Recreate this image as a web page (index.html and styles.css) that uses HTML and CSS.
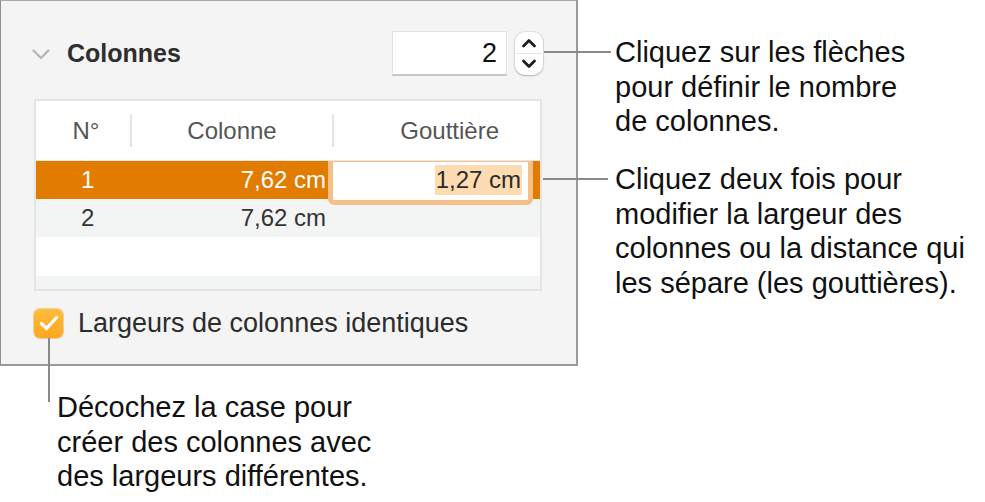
FILE: index.html
```html
<!DOCTYPE html>
<html lang="fr">
<head>
<meta charset="utf-8">
<title>Colonnes</title>
<link rel="stylesheet" href="styles.css">
</head>
<body>
<div class="stage">
  <section class="panel">
    <div class="head">
      <svg class="disclosure" width="18" height="11" viewBox="0 0 18 11"><polyline points="1.5,1.5 9,9 16.5,1.5" fill="none" stroke="#b4b4b4" stroke-width="2.2" stroke-linecap="round" stroke-linejoin="round"/></svg>
      <h2 class="title">Colonnes</h2>
      <div class="numfield">2</div>
      <div class="stepper">
        <svg class="arrow" width="16" height="10" viewBox="0 0 16 10"><polyline points="2.5,8 8,2.5 13.5,8" fill="none" stroke="#1e1e1e" stroke-width="2.8" stroke-linecap="round" stroke-linejoin="round"/></svg>
        <div class="stepsep"></div>
        <svg class="arrow" width="16" height="10" viewBox="0 0 16 10"><polyline points="2.5,2 8,7.5 13.5,2" fill="none" stroke="#1e1e1e" stroke-width="2.8" stroke-linecap="round" stroke-linejoin="round"/></svg>
      </div>
    </div>
    <div class="table">
      <div class="row hrow">
        <div class="hcell c-no">N°</div>
        <div class="hcell c-col sep">Colonne</div>
        <div class="hcell c-gut sep">Gouttière</div>
      </div>
      <div class="row r-sel">
        <div class="cell c-no">1</div>
        <div class="cell c-col">7,62 cm</div>
        <div class="cell c-gut"></div>
        <div class="editor"><span class="hl">1,27 cm</span></div>
      </div>
      <div class="row r-alt">
        <div class="cell c-no">2</div>
        <div class="cell c-col">7,62 cm</div>
        <div class="cell c-gut"></div>
      </div>
      <div class="row r-empty"></div>
      <div class="row r-alt r-last"></div>
    </div>
    <label class="check">
      <span class="box"><svg width="22" height="18" viewBox="0 0 22 18"><polyline points="3.5,9.5 8.5,14.5 18.5,3.5" fill="none" stroke="#fff" stroke-width="3.2" stroke-linecap="round" stroke-linejoin="round"/></svg></span>
      <span class="check-label">Largeurs de colonnes identiques</span>
    </label>
  </section>

  <div class="leader lead-a"></div>
  <div class="leader lead-b"></div>
  <div class="leader lead-c"></div>

  <p class="callout call-a">Cliquez sur les flèches<br>pour définir le nombre<br>de colonnes.</p>
  <p class="callout call-b">Cliquez deux fois pour<br>modifier la largeur des<br>colonnes ou la distance qui<br>les sépare (les gouttières).</p>
  <p class="callout call-c">Décochez la case pour<br>créer des colonnes avec<br>des largeurs différentes.</p>
</div>
</body>
</html>
```

FILE: styles.css
```css
* { box-sizing: border-box; }
html, body {
  margin: 0;
  padding: 0;
  background: #ffffff;
}
body {
  font-family: "Liberation Sans", Arial, sans-serif;
  color: #111;
}
.stage {
  position: relative;
  width: 985px;
  height: 502px;
  overflow: hidden;
}

/* Panel */
.panel {
  width: 578px;
  height: 366px;
  background: #f4f4f4;
  border-left: 1px solid #8e8e8e;
  border-top: 1px solid #a8a8a8;
  border-right: 2px solid #9a9a9a;
  border-bottom: 2px solid #9a9a9a;
  display: flex;
  flex-direction: column;
  padding-top: 30px;
}
.head {
  display: flex;
  align-items: center;
  height: 45px;
  padding-left: 31px;
}
.disclosure {
  display: block;
  margin-top: 2px;
}
.title {
  margin: 0 0 0 17px;
  font-size: 25px;
  font-weight: bold;
  color: #2e2e2e;
  flex: 1;
}
.numfield {
  width: 115px;
  height: 45px;
  background: #fff;
  border: 1px solid #e2e2e2;
  border-bottom: 2px solid #c6c6c6;
  text-align: right;
  padding-right: 9px;
  font-size: 27px;
  line-height: 43px;
  color: #111;
}
.stepper {
  width: 28px;
  height: 43px;
  margin-left: 8px;
  margin-right: 33px;
  background: #fff;
  border-radius: 10px;
  box-shadow: 0 0 0 1px rgba(0,0,0,0.07), 0 1px 2px rgba(0,0,0,0.22);
  display: flex;
  flex-direction: column;
  align-items: center;
  justify-content: center;
  gap: 5px;
}
.arrow { display: block; }
.stepsep {
  width: 26px;
  height: 1px;
  background: #e6e6e6;
}

/* Table */
.table {
  position: relative;
  margin: 23px 0 0 33px;
  width: 508px;
  height: 192px;
  border: 2px solid #e4e4e4;
  background: #fff;
  overflow: hidden;
}
.row {
  position: relative;
  display: grid;
  grid-template-columns: 94px 202px 208px;
  height: 38px;
  align-items: center;
  font-size: 24px;
}
.hrow {
  height: 60px;
  background: #fff;
  border-bottom: 1px solid #e8e8e8;
}
.hcell {
  height: 33px;
  line-height: 33px;
  color: #555;
  font-size: 24px;
  text-align: center;
}
.hcell.sep { border-left: 2px solid #e4e4e4; }
.hcell.c-no { padding-left: 6px; }
.hcell.c-gut {
  text-align: right;
  padding-right: 41px;
}
.cell { line-height: 38px; }
.cell.c-no { padding-left: 45px; }
.cell.c-col {
  text-align: right;
  padding-right: 6px;
}
.r-sel {
  background: #e17c00;
  color: #fff;
}
.r-alt {
  background: #f3f4f4;
  color: #333;
}
.r-empty {
  height: 39px;
  background: #fff;
}
.r-last { height: 13px; }
.editor {
  position: absolute;
  left: 292px;
  top: 0;
  width: 205px;
  height: 44px;
  background: #fff;
  border: 5px solid #f6bf88;
  border-top: 1px solid #f6bf88;
  border-radius: 0 0 6px 6px;
  text-align: right;
  padding-right: 6px;
  padding-top: 3px;
  color: #2a2a2a;
  z-index: 2;
}
.hl {
  display: inline-block;
  background: #fedcb2;
  line-height: 30px;
  padding: 0 1px;
}
.r-alt .cell { color: #333; }

/* Checkbox */
.check {
  display: flex;
  align-items: center;
  margin: 17px 0 0 33px;
  height: 30px;
}
.box {
  width: 29px;
  height: 29px;
  border-radius: 6px;
  background: linear-gradient(#ffbd3a, #fca81e);
  box-shadow: 0 0 0 1px rgba(230,150,20,0.4);
  display: flex;
  align-items: center;
  justify-content: center;
}
.box svg { display: block; }
.check-label {
  margin-left: 15px;
  font-size: 27px;
  color: #2c2c2c;
}

/* Leaders */
.leader {
  position: absolute;
  background: #8a8a8a;
}
.lead-a { left: 544px; top: 51px; width: 67px; height: 2px; }
.lead-b { left: 543px; top: 178px; width: 65px; height: 2px; }
.lead-c { left: 48px; top: 338px; width: 2px; height: 64px; }

/* Callouts */
.callout {
  position: absolute;
  margin: 0;
  font-size: 29px;
  line-height: 34.5px;
  color: #111;
  white-space: nowrap;
}
.call-a { left: 615px; top: 35px; }
.call-b { left: 615px; top: 162px; }
.call-c { left: 57px; top: 390px; }
```
